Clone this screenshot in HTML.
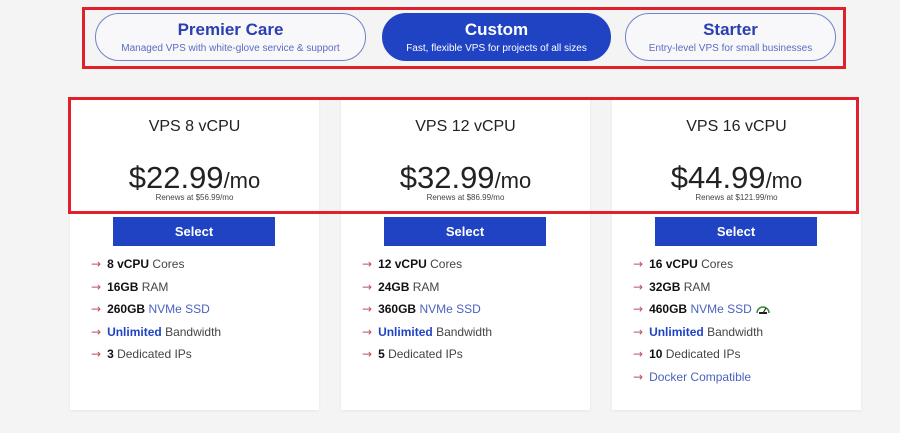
<!DOCTYPE html>
<html><head><style>
*{margin:0;padding:0;box-sizing:border-box}
body{width:900px;height:433px;background:#f4f4f4;font-family:"Liberation Sans",sans-serif;position:relative;overflow:hidden}
.rb{position:absolute;border:3px solid #e0202a}
.pill{position:absolute;top:13px;height:48px;border-radius:24px;border:1.5px solid #6f83c9;background:#f8f8fb;text-align:center;color:#2a3fb0}
.pill b{display:block;font-size:17px;margin-top:6px}
.pill span{display:block;font-size:10px;margin-top:3px;color:#5a6cbf}
.pill.on{background:#2043c4;border-color:#2043c4;color:#fff}
.pill.on span{color:#fff}
.card{position:absolute;top:98px;width:249px;height:312px;background:#fff;box-shadow:0 1px 3px rgba(0,0,0,.06)}
.t{position:absolute;top:20px;width:100%;text-align:center;font-size:16px;color:#222}
.p{position:absolute;top:62px;width:100%;text-align:center;font-size:31px;color:#222}
.p small{font-size:22px}
.r{position:absolute;top:95px;width:100%;text-align:center;font-size:8px;color:#444}
.btn{position:absolute;top:119px;left:43px;width:162px;height:29px;background:#2043c4;color:#fff;font-weight:bold;font-size:13px;text-align:center;line-height:29px}
ul{position:absolute;top:158px;left:21px;list-style:none;font-size:12px;color:#444}
li{height:22.5px;line-height:17px}
li:before{content:"→";font-family:"DejaVu Sans",sans-serif;font-size:12px;color:#c0505a;margin-right:6px}
li b{color:#111}
.bl{color:#4a62c0}
li b.bl{color:#2043c4}
</style></head><body>
<div class="pill" style="left:95px;width:271px"><b>Premier Care</b><span>Managed VPS with white-glove service &amp; support</span></div>
<div class="pill on" style="left:382px;width:229px"><b>Custom</b><span>Fast, flexible VPS for projects of all sizes</span></div>
<div class="pill" style="left:625px;width:211px"><b>Starter</b><span>Entry-level VPS for small businesses</span></div>
<div class="rb" style="left:82px;top:7px;width:764px;height:62px"></div>

<div class="card" style="left:70px"><div class="t">VPS 8 vCPU</div><div class="p">$22.99<small>/mo</small></div><div class="r">Renews at $56.99/mo</div><div class="btn">Select</div>
<ul><li><b>8 vCPU</b> Cores</li><li><b>16GB</b> RAM</li><li><b>260GB</b> <span class="bl">NVMe SSD</span></li><li><b class="bl">Unlimited</b> Bandwidth</li><li><b>3</b> Dedicated IPs</li></ul></div>

<div class="card" style="left:341px"><div class="t">VPS 12 vCPU</div><div class="p">$32.99<small>/mo</small></div><div class="r">Renews at $86.99/mo</div><div class="btn">Select</div>
<ul><li><b>12 vCPU</b> Cores</li><li><b>24GB</b> RAM</li><li><b>360GB</b> <span class="bl">NVMe SSD</span></li><li><b class="bl">Unlimited</b> Bandwidth</li><li><b>5</b> Dedicated IPs</li></ul></div>

<div class="card" style="left:612px"><div class="t">VPS 16 vCPU</div><div class="p">$44.99<small>/mo</small></div><div class="r">Renews at $121.99/mo</div><div class="btn">Select</div>
<ul><li><b>16 vCPU</b> Cores</li><li><b>32GB</b> RAM</li><li><b>460GB</b> <span class="bl">NVMe SSD</span> <svg width="16" height="12" viewBox="0 0 16 12" style="vertical-align:-2px"><path d="M2 10A6 6 0 0 1 14 10" fill="none" stroke="#3a8a3a" stroke-width="1.5"/><path d="M8 10L11 5" stroke="#222" stroke-width="1.2"/><rect x="4" y="9" width="8" height="2" fill="#222"/></svg></li><li><b class="bl">Unlimited</b> Bandwidth</li><li><b>10</b> Dedicated IPs</li><li><span class="bl">Docker Compatible</span></li></ul></div>

<div class="rb" style="left:68px;top:97px;width:791px;height:117px"></div>
</body></html>
